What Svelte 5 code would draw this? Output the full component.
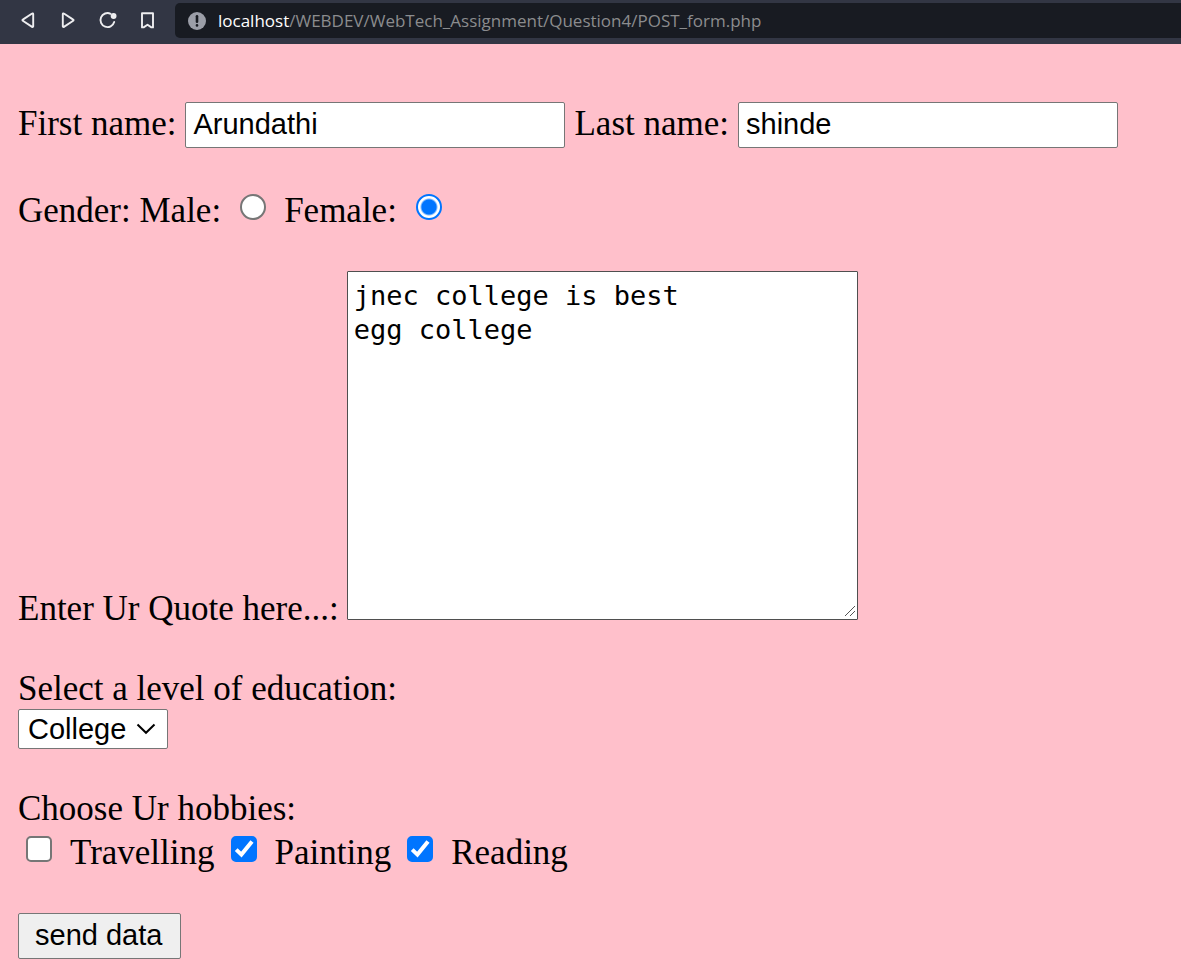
<script>
  let firstName = $state('Arundathi');
  let lastName = $state('shinde');
  let gender = $state('female');
  let quote = $state('jnec college is best\negg college');
  let level = $state('College');
  let hobbies = $state([
    { name: 'Travelling', checked: false },
    { name: 'Painting', checked: true },
    { name: 'Reading', checked: true }
  ]);
</script>

<div class="page">
  <header class="toolbar">
    <nav class="nav">
      <button type="button" aria-label="Back">
        <svg viewBox="0 0 20 20"><path d="M15.2 3v12.4a.7.7 0 0 1-1.1.5L4.8 9.8a.7.7 0 0 1 0-1.2l9.3-6.1a.7.7 0 0 1 1.1.5z" /></svg>
      </button>
      <button type="button" aria-label="Forward">
        <svg viewBox="0 0 20 20"><path d="M4.8 3v12.4a.7.7 0 0 0 1.1.5l9.3-6.1a.7.7 0 0 0 0-1.2L5.9 2.5a.7.7 0 0 0-1.1.5z" /></svg>
      </button>
      <button type="button" aria-label="Reload">
        <svg viewBox="0 0 20 20"><path d="M12.6 2.8A7 7 0 1 0 16.2 11" /><circle class="dot" cx="15.6" cy="5" r="2.9" /></svg>
      </button>
      <button type="button" aria-label="Bookmark">
        <svg viewBox="0 0 20 20"><path d="M4 2.2h11v14.2h-1.6l-3.9-2.6-3.9 2.6H4z" /></svg>
      </button>
    </nav>
    <div class="address">
      <svg class="info" viewBox="0 0 18 18"><circle cx="9" cy="9" r="9" /><path d="M9 4.2v5.6" /><path d="M9 13.2v.2" /></svg>
      <span class="url"><b>localhost</b>/WEBDEV/WebTech_Assignment/Question4/POST_form.php</span>
    </div>
  </header>

  <form onsubmit={(e) => e.preventDefault()}>
    <div class="row names">
      <label for="first">First name:</label>
      <input id="first" class="text" type="text" bind:value={firstName} />
      <label for="last">Last name:</label>
      <input id="last" class="text" type="text" bind:value={lastName} />
    </div>

    <div class="row gender">
      <label for="male">Gender: Male:</label>
      <input id="male" type="radio" value="male" bind:group={gender} />
      <label for="female">Female:</label>
      <input id="female" type="radio" value="female" bind:group={gender} />
    </div>

    <div class="row quote">
      <label for="quote">Enter Ur Quote here...:</label>
      <div class="area">
        <textarea id="quote" spellcheck="false" bind:value={quote}></textarea>
        <svg viewBox="0 0 11 11" shape-rendering="crispEdges"><path d="M.5 10.5l10-10M5.5 10.5l5-5" /></svg>
      </div>
    </div>

    <div class="level">
      <label for="level">Select a level of education:</label>
      <div class="select">
        <select id="level" bind:value={level}>
          <option>College</option>
        </select>
        <svg viewBox="0 0 20 12"><path d="M1.5 1.5 10 9.8l8.5-8.3" /></svg>
      </div>
    </div>

    <div class="hobbies">
      <div>Choose Ur hobbies:</div>
      <div class="row choices">
        {#each hobbies as hobby (hobby.name)}
          <span class="tick">
            <input id={hobby.name} type="checkbox" bind:checked={hobby.checked} />
            <svg viewBox="0 0 26 26"><path d="M5.2 13.6l5.2 5L21 5.4" /></svg>
          </span>
          <label for={hobby.name}>{hobby.name}</label>
        {/each}
      </div>
    </div>

    <button class="send" type="submit">send data</button>
  </form>
</div>

<style>
  :global(body) {
    margin: 0;
    background: #ffc0cb;
  }
  .page {
    min-height: 100vh;
    color: #000;
    font: 35px/40px 'Liberation Serif', 'Times New Roman', serif;
  }
  .toolbar {
    display: flex;
    gap: 8px;
    box-sizing: border-box;
    height: 44px;
    padding: 3px 0 6px 18px;
    background: #323644;
  }
  .nav {
    display: flex;
    align-items: center;
    gap: 20px;
    padding-right: 9px;
  }
  .nav button {
    display: flex;
    padding: 0;
    border: 0;
    background: none;
  }
  .nav svg {
    width: 20px;
    height: 20px;
    fill: none;
    stroke: #eeeef0;
    stroke-width: 1.9;
    stroke-linejoin: round;
    stroke-linecap: round;
  }
  .nav .dot {
    fill: #eeeef0;
    stroke: none;
  }
  .address {
    display: flex;
    flex: 1;
    align-items: center;
    gap: 12px;
    min-width: 0;
    padding-left: 13px;
    border-radius: 5px 0 0 5px;
    background: #181b22;
  }
  .info {
    flex: none;
    width: 18px;
    height: 18px;
    fill: #9b9ea8;
  }
  .info path {
    stroke: #181b22;
    stroke-width: 2.6;
    stroke-linecap: round;
  }
  .url {
    overflow: hidden;
    color: #8b8c8e;
    font: 17px/26px 'Open Sans', 'Noto Sans', sans-serif;
    white-space: nowrap;
  }
  .url b {
    color: #fff;
    font-weight: 400;
  }
  form {
    display: flex;
    flex-direction: column;
    align-items: flex-start;
    gap: 40px;
    padding: 58px 18px 18px;
  }
  .row {
    display: flex;
    gap: 9px;
    max-width: 100%;
  }
  .row label {
    flex: none;
  }
  .names {
    width: 100%;
    height: 49px;
    align-items: flex-start;
  }
  .names label {
    padding-top: 2px;
  }
  .text {
    box-sizing: border-box;
    flex: 0 1 380px;
    min-width: 0;
    height: 46px;
    padding: 0 7px 1px;
    border: 1px solid #767676;
    border-radius: 2px;
    background: #fff;
    font: 29px/43px 'Liberation Sans', Arial, sans-serif;
  }
  .gender {
    gap: 18px;
  }
  .choices {
    gap: 16px;
  }
  input[type='radio'],
  input[type='checkbox'] {
    box-sizing: border-box;
    flex: none;
    width: 26px;
    height: 26px;
    margin: 0;
    border: 2px solid #767676;
    appearance: none;
    background: #fff;
  }
  input[type='radio'] {
    margin: 3px 0 0 1px;
    border-radius: 50%;
  }
  input[type='radio']:checked {
    border-color: #0075ff;
    background: radial-gradient(circle, #0075ff 7px, #fff 9px);
  }
  input[type='checkbox'] {
    border-radius: 5px;
  }
  input[type='checkbox']:checked {
    border-color: #0075ff;
    background: #0075ff;
  }
  .tick {
    display: grid;
    align-content: start;
    margin: 3px 2px 0 0;
  }
  .tick input,
  .tick svg {
    grid-area: 1 / 1;
  }
  .tick svg {
    width: 26px;
    height: 26px;
    fill: none;
    pointer-events: none;
  }
  .tick input:checked + svg {
    stroke: #fff;
    stroke-width: 4;
  }
  .quote {
    gap: 8px;
    align-items: flex-end;
  }
  .area {
    display: grid;
    margin-bottom: 9px;
  }
  .area textarea,
  .area svg {
    grid-area: 1 / 1;
  }
  .area svg {
    place-self: end;
    width: 11px;
    height: 11px;
    margin: 0 3px 3px 0;
    fill: none;
    stroke: #555;
    pointer-events: none;
  }
  textarea {
    box-sizing: border-box;
    width: 511px;
    height: 349px;
    margin: 0;
    padding: 7px 6px;
    border: 1px solid #4f4f4f;
    border-radius: 1px;
    resize: none;
    background: #fff;
    color: #000;
    font: 27px/34px 'DejaVu Sans Mono', Consolas, monospace;
  }
  .level label {
    display: block;
  }
  .select {
    display: grid;
    width: 150px;
    align-items: center;
  }
  .select select,
  .select svg {
    grid-area: 1 / 1;
  }
  select {
    box-sizing: border-box;
    height: 40px;
    padding: 0 36px 0 9px;
    border: 1px solid #767676;
    border-radius: 2px;
    appearance: none;
    background: #fff;
    color: #000;
    font: 29px/38px 'Liberation Sans', Arial, sans-serif;
  }
  .select svg {
    justify-self: end;
    width: 20px;
    height: 12px;
    margin-right: 12px;
    fill: none;
    stroke: #000;
    stroke-width: 2;
    pointer-events: none;
  }
  .hobbies {
    display: flex;
    flex-direction: column;
    gap: 4px;
  }
  .hobbies .row {
    padding-left: 8px;
  }
  .send {
    height: 46px;
    padding: 0 18px 1px 16px;
    border: 1px solid #767676;
    border-radius: 2px;
    background: #efefef;
    color: #000;
    font: 29px/43px 'Liberation Sans', Arial, sans-serif;
  }
</style>
